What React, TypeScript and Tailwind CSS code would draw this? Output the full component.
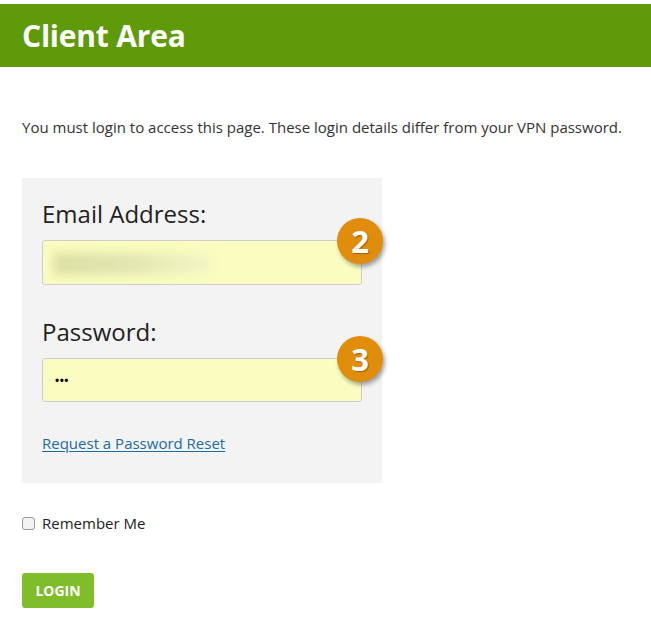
export default function App() {
  return (
    <main className="min-h-screen bg-white pt-[4px] font-['Open_Sans',sans-serif] text-[#333]">
      {/* Header */}
      <header className="h-[63px] bg-[#5e9a0a] flex items-center px-[22px]">
        <h1 className="text-[30px] font-bold text-white leading-none tracking-[-0.2px]">Client Area</h1>
      </header>

      <div className="px-[22px]">
        <p className="mt-[49px] text-[15px] leading-[22px] text-[#333]">
          You must login to access this page. These login details differ from your VPN password.
        </p>

        {/* Login box */}
        <section className="mt-[40px] w-[360px] h-[305px] bg-[#f3f3f3] px-[20px] pt-[21px]">
          <label className="block text-[24px] leading-[30px] text-[#222]">Email Address:</label>
          <div className="relative mt-[11px]">
            <div className="h-[45px] w-[320px] rounded-[3px] border border-[#cfcfcf] bg-[#fafdbf] overflow-hidden relative">
              <div className="absolute left-[10px] top-[12px] h-[22px] w-[160px] blur-[5px] bg-gradient-to-r from-[#dcdfa4] via-[#e3e6b0] to-[#f5f8c6]" />
            </div>
            <Badge n="2" className="absolute left-[295px] top-[-22px]" />
          </div>

          <label className="block mt-[32px] text-[24px] leading-[30px] text-[#222]">Password:</label>
          <div className="relative mt-[11px]">
            <div className="h-[44px] w-[320px] rounded-[3px] border border-[#cfcfcf] bg-[#fafdbf] flex items-center pl-[12px] text-[11px] text-black tracking-[0.5px] font-bold">
              •••
            </div>
            <Badge n="3" className="absolute left-[295px] top-[-22px]" />
          </div>

          <a href="#" className="block mt-[30px] text-[15px] leading-[22px] text-[#1b6d9c] underline underline-offset-2">
            Request a Password Reset
          </a>
        </section>

        <label className="mt-[30px] flex items-center gap-[7px] text-[15px] leading-[20px] text-[#222]">
          <span className="w-[13px] h-[13px] rounded-[3px] border border-[#9a9a9a] bg-[#f3f3f3]" />
          Remember Me
        </label>

        <button className="mt-[40px] h-[35px] w-[72px] rounded-[3px] bg-[#80bd2b] text-white text-[14px] font-bold">
          LOGIN
        </button>
      </div>
    </main>
  );
}

function Badge({ n, className }: { n: string; className: string }) {
  return (
    <div
      className={`${className} w-[46px] h-[46px] rounded-full bg-[#e08d0c] flex items-center justify-center text-white text-[31px] font-bold leading-none shadow-[2px_3px_4px_rgba(0,0,0,0.35)] [text-shadow:1px_1px_1px_rgba(0,0,0,0.3)]`}
    >
      {n}
    </div>
  );
}
